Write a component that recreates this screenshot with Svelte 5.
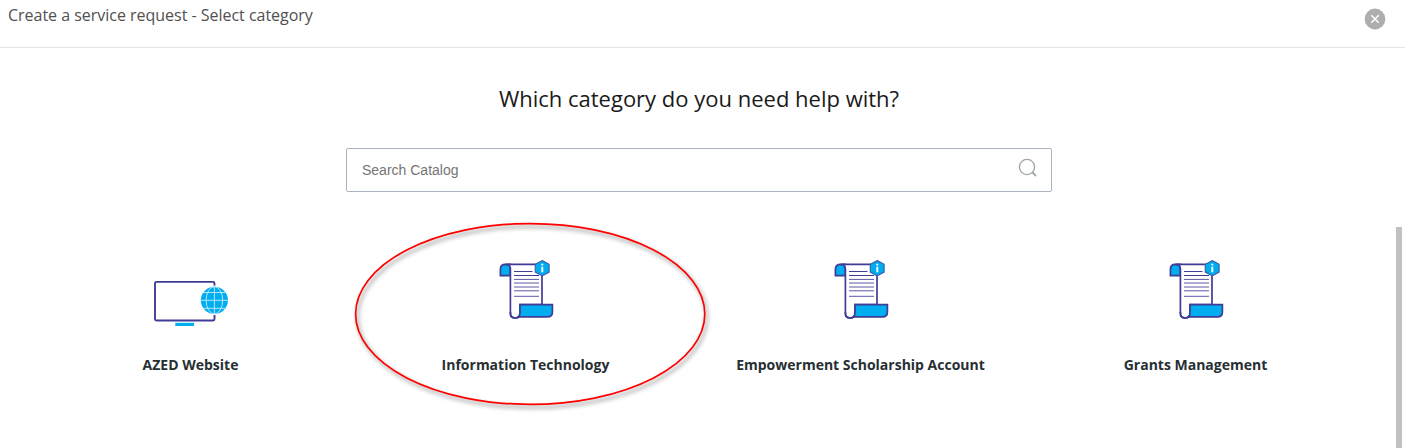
<script lang="ts">
  interface Category {
    name: string;
    icon: "website" | "scroll";
    highlighted?: boolean;
  }

  const categories: Category[] = [
    { name: "AZED Website", icon: "website" },
    { name: "Information Technology", icon: "scroll", highlighted: true },
    { name: "Empowerment Scholarship Account", icon: "scroll" },
    { name: "Grants Management", icon: "scroll" },
  ];

  let search = $state("");
</script>

<div class="dialog">
  <header class="dialog-header">
    <h1>Create a service request - Select category</h1>
    <button class="close-button" aria-label="Close">
      <svg width="22" height="22" viewBox="0 0 22 22">
        <circle cx="11" cy="11" r="10.4" fill="#aeaeae" />
        <path d="M7.3 7.3l7.4 7.4M14.7 7.3l-7.4 7.4" stroke="#fff" stroke-width="1.5" />
      </svg>
    </button>
  </header>

  <main class="dialog-body">
    <h2>Which category do you need help with?</h2>

    <div class="search-box">
      <input type="text" placeholder="Search Catalog" bind:value={search} />
      <svg width="20" height="20" viewBox="0 0 20 20" fill="none" stroke="#a0a6aa">
        <circle cx="9" cy="9" r="7.6" stroke-width="1.4" />
        <path d="M14 14l4 4" stroke-width="1.8" />
      </svg>
    </div>

    <div class="category-area">
      <div class="category-grid">
        {#each categories as category}
          <div class="category">
            {#if category.icon === "website"}
              <svg class="category-icon" viewBox="0 0 81 80">
                <rect x="5" y="31.9" width="59.5" height="38.6" rx="1.5" fill="#fff" stroke="#403c96" stroke-width="1.9" />
                <rect x="25.3" y="72.8" width="18.8" height="3.2" fill="#00adef" />
                <circle cx="64.4" cy="50.3" r="14.7" fill="#fff" />
                <circle cx="64.4" cy="50.3" r="13.6" fill="#00adef" />
                <g fill="none" stroke="#b5e6fa" stroke-width="1">
                  <path d="M64.4 36.7v27.2M50.8 50.3h27.2M53 42.5h22.8M53 58.3h22.8" />
                  <ellipse cx="64.4" cy="50.3" rx="8.3" ry="13.6" />
                </g>
              </svg>
            {:else}
              <svg class="category-icon" viewBox="0 0 81 80">
                <g stroke="#403c96" stroke-width="1.7">
                  <path d="M25.4 25.7H15.4V19.5Q15.4 14.4 20.4 14.4H25.4Z" fill="#00adef" />
                  <path d="M20.4 14.4H57V54.6H35V63.3Q35 68 30.2 68T25.4 63.3V19Q25.4 14.4 20.4 14.4Z" fill="#fff" />
                  <path d="M35 54.6H67.4V62Q67.4 66.9 62.5 66.9H33.2Q35 65.5 35 63Z" fill="#00adef" />
                  <path d="M25.4 62V63.3Q25.4 68 30.2 68Q32.6 68 34 66.9" fill="none" />
                </g>
                <g stroke="#403c96" stroke-width="1">
                  <path d="M29 21.5h18.5M29 25.5h25" />
                  <path d="M29 29.4h25M29 33h25M29 37h25M29 40.8h25M29 46.3h25" opacity=".85" />
                </g>
                <path d="M57.2 10.6l6.9 3.7v7.8l-6.9 3.7-6.9-3.7v-7.8z" fill="#00adef" stroke="#3a62b0" stroke-width="1.2" />
                <path d="M57.3 13.8v1.7M57.3 16.8v5.4" stroke="#fff" stroke-width="1.9" />
              </svg>
            {/if}
            <span class="category-name">{category.name}</span>
            {#if category.highlighted}
              <svg class="highlight" viewBox="0 0 370 200">
                <ellipse cx="185.2" cy="99" rx="174.6" ry="90.4" />
              </svg>
            {/if}
          </div>
        {/each}
      </div>
      <div class="scrollbar"></div>
    </div>
  </main>
</div>

<style>
  :global(body) {
    margin: 0;
    background: #fff;
    overflow: hidden;
  }

  .dialog {
    display: flex;
    flex-direction: column;
    height: 448px;
    font-family: "Open Sans", sans-serif;
    overflow: hidden;
  }

  .dialog-header {
    display: flex;
    justify-content: space-between;
    align-items: flex-start;
    box-sizing: border-box;
    height: 48px;
    padding: 4px 19px 0 8px;
    border-bottom: 1px solid #e5e5e5;
  }

  h1 {
    margin: 0;
    font-size: 16px;
    font-weight: 400;
    line-height: 22px;
    letter-spacing: -0.02px;
    color: #505050;
  }

  .close-button {
    display: flex;
    margin-top: 4px;
    padding: 0;
    border: none;
    background: none;
    cursor: pointer;
  }

  .dialog-body {
    display: flex;
    flex: 1;
    flex-direction: column;
  }

  h2 {
    margin: 35px 7px 0 0;
    font-size: 22px;
    font-weight: 400;
    line-height: 30px;
    text-align: center;
    color: #1a1a1a;
  }

  /* Search */
  .search-box {
    display: flex;
    align-items: center;
    box-sizing: border-box;
    width: 706px;
    height: 44px;
    margin: 35px 0 0 346px;
    padding: 0 13px 0 15px;
    border: 1px solid #a9b4c0;
    border-radius: 2px;
  }

  .search-box input {
    flex: 1;
    padding: 0;
    border: none;
    outline: none;
    font-family: "Liberation Sans", Arial, sans-serif;
    font-size: 14px;
    color: #333;
  }

  .search-box input::placeholder {
    color: #757575;
    opacity: 1;
  }

  .search-box svg {
    margin-bottom: 4px;
  }

  /* Categories */
  .category-area {
    display: flex;
    flex: 1;
    margin-top: 35px;
  }

  .category-grid {
    display: grid;
    grid-template-columns: repeat(4, 335px);
    flex: 1;
    padding: 23px 0 0 23px;
  }

  .category {
    position: relative;
    display: flex;
    flex-direction: column;
    align-items: center;
  }

  .category-icon {
    width: 81px;
    height: 80px;
  }

  .category-name {
    margin-top: 25px;
    font-size: 14px;
    font-weight: 700;
    line-height: 20px;
    white-space: nowrap;
    color: #272f33;
  }

  .highlight {
    position: absolute;
    top: -35px;
    left: -13px;
    width: 370px;
    height: 200px;
    overflow: visible;
    pointer-events: none;
    filter: drop-shadow(2px 3px 2px rgba(0, 0, 0, 0.5));
  }

  .highlight ellipse {
    fill: none;
    stroke: #f00;
    stroke-width: 1.7;
  }

  .scrollbar {
    width: 6px;
    margin-right: 3px;
    background: #c1c1c1;
  }
</style>
